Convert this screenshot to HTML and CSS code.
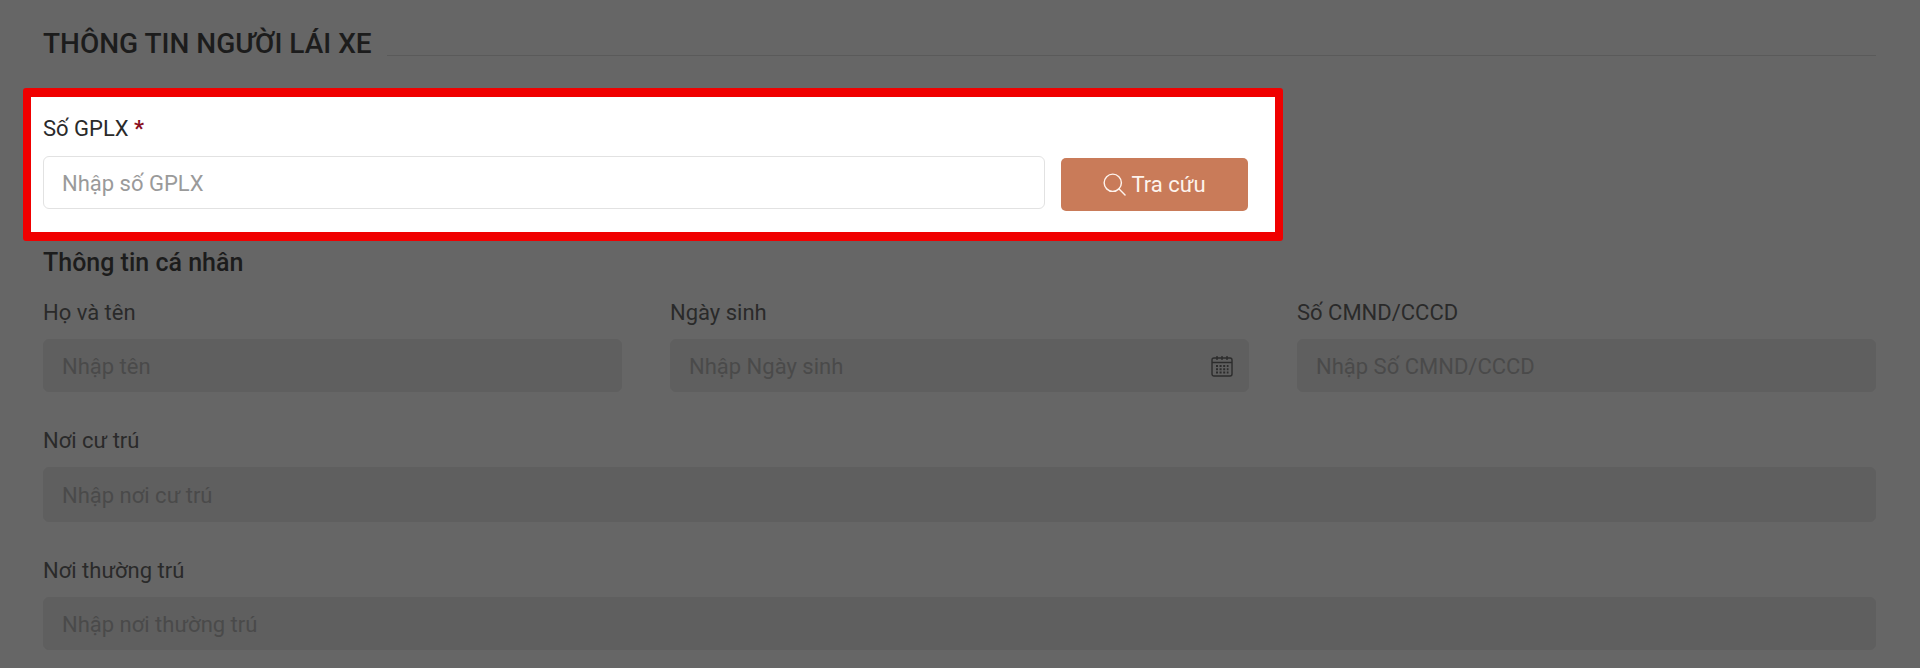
FILE: index.html
```html
<!DOCTYPE html>
<html lang="vi">
<head>
<meta charset="utf-8">
<title>Thông tin người lái xe</title>
<link rel="stylesheet" href="styles.css">
</head>
<body>
<main class="page">
  <div class="title-row">
    <h1 class="title">THÔNG TIN NGƯỜI LÁI XE</h1>
    <div class="title-line"></div>
  </div>

  <section class="highlight">
    <label class="label">Số GPLX <span class="req">*</span></label>
    <div class="lookup">
      <input class="input input-active" type="text" placeholder="Nhập số GPLX">
      <button class="btn" type="button">
        <svg class="btn-icon" viewBox="0 0 24 24" fill="none" stroke="currentColor" stroke-width="1.5" stroke-linecap="round"><circle cx="10.2" cy="10.2" r="9"/><path d="M16.8 16.8 23 23"/></svg>
        Tra cứu
      </button>
    </div>
  </section>

  <h2 class="subtitle">Thông tin cá nhân</h2>

  <div class="grid3">
    <div class="field">
      <label class="label">Họ và tên</label>
      <input class="input" type="text" placeholder="Nhập tên" disabled>
    </div>
    <div class="field">
      <label class="label">Ngày sinh</label>
      <div class="date-wrap">
        <input class="input" type="text" placeholder="Nhập Ngày sinh" disabled>
        <svg class="cal" viewBox="0 0 22 22" fill="none" stroke="currentColor" stroke-width="1.4">
          <rect x="1" y="3" width="20" height="18" rx="2"/>
          <path d="M1 7.5h20M6 1v4M11 1v4M16 1v4"/>
          <path stroke-width="2" stroke-dasharray="2 1.6" d="M5 11h12.5M5 14.2h12.5M5 17.4h12.5"/>
        </svg>
      </div>
    </div>
    <div class="field">
      <label class="label">Số CMND/CCCD</label>
      <input class="input" type="text" placeholder="Nhập Số CMND/CCCD" disabled>
    </div>
  </div>

  <div class="field field-wide">
    <label class="label">Nơi cư trú</label>
    <input class="input input-tall" type="text" placeholder="Nhập nơi cư trú" disabled>
  </div>

  <div class="field field-wide">
    <label class="label">Nơi thường trú</label>
    <input class="input" type="text" placeholder="Nhập nơi thường trú" disabled>
  </div>
</main>
</body>
</html>
```
FILE: styles.css
```css
* { box-sizing: border-box; }
html, body { margin: 0; height: 100%; }
body {
  background: #666666;
  font-family: Roboto, "Noto Sans", sans-serif;
  color: #222222;
  overflow: hidden;
}
.page { padding: 29px 44px 0 43px; }

.title-row { display: flex; align-items: flex-end; gap: 15px; height: 28px; }
.title { margin: 0; font-size: 28px; line-height: 26px; font-weight: 500; white-space: nowrap; color: #1c1c1c; }
.title-line { flex: 1; height: 1px; margin-bottom: 1px; background: #5a5a5a; }

.highlight {
  width: 1260px;
  margin: 31px 0 0 -20px;
  padding: 20px 27px 21px 12px;
  background: #ffffff;
  border: 8px solid #f00000;
  border-top-width: 9px;
  border-bottom-width: 9px;
  border-radius: 3px;
}
.label { display: block; font-size: 22px; line-height: 24px; color: #2a2a2a; }
.req { color: #8a0f1e; font-weight: 700; }

.lookup { display: flex; align-items: flex-start; gap: 16px; margin-top: 15px; }
.input {
  display: block;
  width: 100%;
  height: 53px;
  padding: 2px 18px 0;
  border: 1px solid #5f5f5f;
  border-radius: 6px;
  background: #5f5f5f;
  font: 400 22px Roboto, "Noto Sans", sans-serif;
  outline: none;
}
.input::placeholder { color: #4a4a4a; opacity: 1; }
.input-active { flex: 1; height: 53px; background: #ffffff; border-color: #e2e2e2; }
.input-active::placeholder { color: #9a9a9a; }
.input-tall { height: 55px; }

.btn {
  display: flex;
  align-items: center;
  justify-content: center;
  gap: 5px;
  width: 187px;
  height: 53px;
  margin-top: 2px;
  padding: 0;
  border: 0;
  border-radius: 5px;
  background: #c97b59;
  color: #fdf3ed;
  font: 400 22px Roboto, "Noto Sans", sans-serif;
}
.btn-icon { width: 23px; height: 23px; }

.subtitle { margin: 8px 0 0; font-size: 25px; line-height: 28px; font-weight: 500; color: #1c1c1c; }

.grid3 { display: grid; grid-template-columns: repeat(3, 579px); gap: 48px; margin-top: 24px; }
.field .input { margin-top: 14px; }
.field-wide { margin-top: 37px; }
.date-wrap { position: relative; }
.cal { position: absolute; right: 16px; top: 16px; width: 22px; height: 22px; color: #2c2c2c; }
```
